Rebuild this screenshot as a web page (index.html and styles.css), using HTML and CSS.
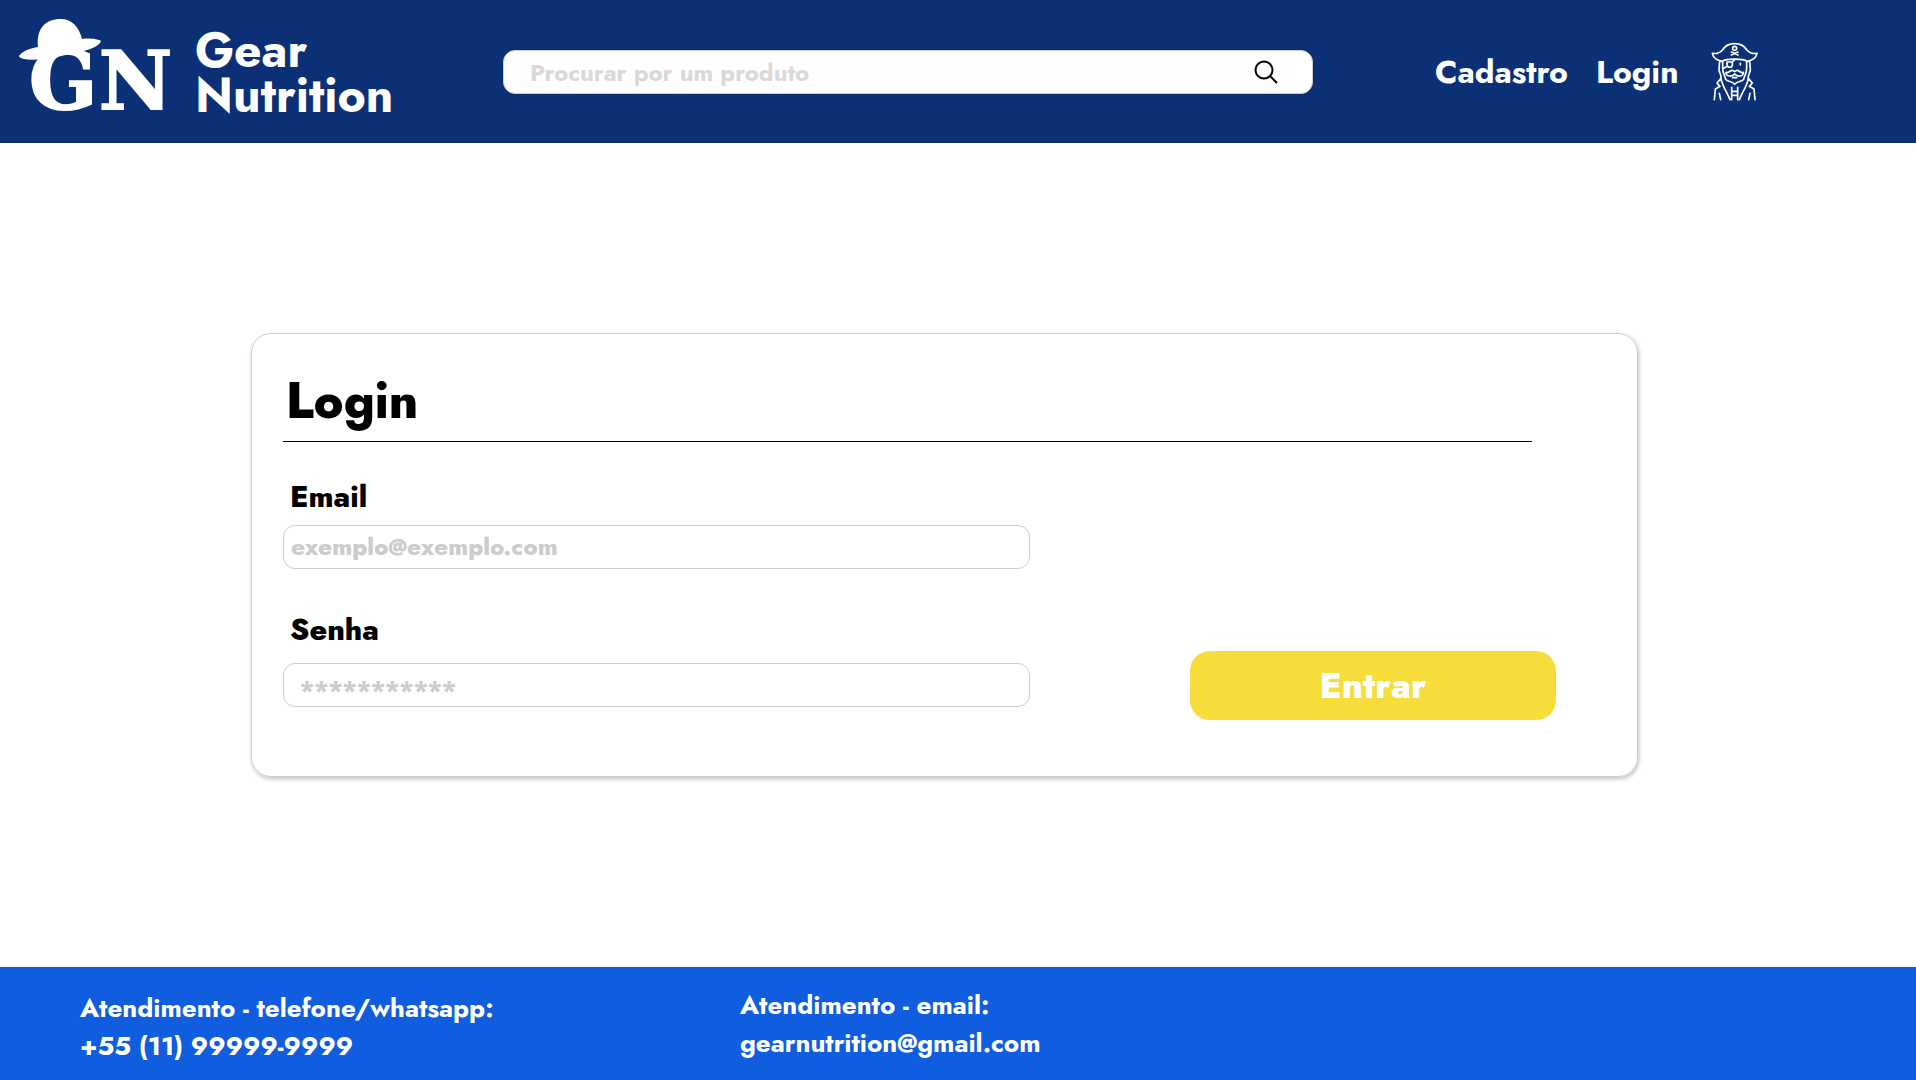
FILE: index.html
```html
<!DOCTYPE html>
<html lang="pt-BR">
<head>
<meta charset="utf-8">
<meta name="viewport" content="width=device-width, initial-scale=1">
<title>Gear Nutrition - Login</title>
<link rel="stylesheet" href="styles.css">
</head>
<body>
<header class="header">
  <a class="brand" href="#">
    <svg class="brand-logo" viewBox="0 0 160 120" aria-hidden="true">
      <text class="brand-letters" x="10" y="90">G<tspan x="80">N</tspan></text>
      <path d="M0 37C3 32 12 29 19 28C17 10 26 0 42 0C53 0 60 8 63 20C70 19 79 20 82 22C81 27 70 31 58 34C40 37 18 43 5 40C1 39 0 38 0 37Z" fill="currentColor"/>
    </svg>
    <span class="brand-name">Gear<br>Nutrition</span>
  </a>
  <form class="search" role="search">
    <input class="search-input" type="search" placeholder="Procurar por um produto" aria-label="Procurar por um produto">
    <button class="search-button" type="button" aria-label="Procurar">
      <svg viewBox="0 0 24 24" width="24" height="24" fill="none" stroke="currentColor" stroke-width="2"><circle cx="10" cy="10" r="8.5"/><path d="M16 16L23 23"/></svg>
    </button>
  </form>
  <nav class="nav">
    <a class="nav-link" href="#">Cadastro</a>
    <a class="nav-link" href="#">Login</a>
    <a class="nav-profile" href="#" aria-label="Perfil">
      <svg viewBox="33 24 144 177" width="48" height="59" fill="none" stroke="currentColor" stroke-width="5" stroke-linejoin="round" stroke-linecap="round">
        <path d="M37 58C51 60 60 57 68 47C78 32 90 29 104 29C118 29 130 32 140 47C148 57 157 60 171 58C168 72 157 79 142 82C129 73 79 73 66 82C51 79 40 72 37 58Z"/>
        <circle cx="104" cy="43" r="6"/>
        <path d="M94 54L114 63M114 54L94 63"/>
        <path d="M68 82V102C68 120 74 122 77 136C84 146 95 139 104 151C113 139 124 146 131 136C134 122 140 120 140 102V82"/>
        <path d="M60 82C55 91 60 96 57 103C55 113 64 120 63 131M148 82C153 91 148 96 151 103C153 113 144 120 145 131"/>
        <path d="M81 84H97V93C97 102 83 102 81 93ZM97 84L104 77M82 97L68 104M121 88V93"/>
        <path d="M78 115C77 128 96 130 104 120C112 130 131 128 130 115C122 119 118 108 110 109L104 113L98 109C90 108 86 119 78 115ZM98 131H110"/>
        <path d="M63 133L51 147L60 157L46 165L43 197M145 133L157 147L148 157L162 165L165 197M63 133C67 157 78 168 90 197M145 133C141 157 130 168 118 197M58 178L62 197M150 178L146 197M95 160V197M113 160V197M95 172H113M95 184H113"/>
      </svg>
    </a>
  </nav>
</header>

<main class="main">
  <section class="card">
    <h1 class="card-title">Login</h1>
    <form class="login">
      <div class="fields">
        <label class="label" for="email">Email</label>
        <input class="input" id="email" type="email" placeholder="exemplo@exemplo.com">
        <label class="label label-password" for="senha">Senha</label>
        <input class="input input-password" id="senha" type="password" placeholder="***********">
      </div>
      <button class="submit" type="button">Entrar</button>
    </form>
  </section>
</main>

<footer class="footer">
  <p class="contact contact-phone">Atendimento - telefone/whatsapp:<br>+55 (11) 99999-9999</p>
  <p class="contact">Atendimento - email:<br>gearnutrition@gmail.com</p>
</footer>
</body>
</html>
```
FILE: styles.css
```css
* {
  box-sizing: border-box;
}

body {
  margin: 0;
  min-height: 100vh;
  display: flex;
  flex-direction: column;
  background: #fff;
  color: #000;
  font-family: Jost, Lato, sans-serif;
  font-weight: 700;
}

input,
button {
  font: inherit;
}

a {
  color: inherit;
  text-decoration: none;
}

.header {
  display: grid;
  grid-template-columns: 503px 1fr 603px;
  align-items: center;
  min-height: 143px;
  background: #0b3075;
  color: #fff;
}

.brand {
  display: flex;
  align-items: center;
  gap: 16px;
  padding: 2px 0 0 19px;
}

.brand-logo {
  flex: none;
  width: 160px;
  height: 120px;
  margin-top: 12px;
}

.brand-letters {
  fill: currentColor;
  stroke: currentColor;
  stroke-width: 2px;
  font: 700 80px "DejaVu Serif", serif;
}

.brand-name {
  font-size: 48px;
  line-height: 45px;
}

.search {
  display: flex;
  align-items: center;
  height: 44px;
  padding: 0 34px 0 26px;
  border: 1px solid #ccc;
  border-radius: 12px;
  background: #fff;
}

.search-input {
  flex: 1;
  min-width: 0;
  height: 40px;
  padding: 2px 0 0;
  border: 0;
  outline: 0;
  background: none;
  font-size: 24px;
}

.search-input::placeholder {
  color: #d9d9d9;
}

.search-button {
  display: flex;
  padding: 0;
  border: 0;
  background: none;
  color: #000;
}

.nav {
  display: flex;
  align-items: center;
  gap: 28px;
  padding-left: 122px;
  font-size: 32px;
}

.nav-profile {
  display: flex;
  padding-left: 4px;
}

.main {
  flex: 1;
  display: flex;
  align-items: center;
  padding: 40px 278px 40px 251px;
}

.card {
  flex: 1;
  padding: 37px 81px 56px 31px;
  border: 1px solid #ccc;
  border-radius: 20px;
  box-shadow: 1px 2px 4px rgba(0, 0, 0, 0.25);
}

.card-title {
  margin: 0 24px 37px 0;
  padding: 0 3px 10px;
  border-bottom: 1px solid #000;
  font-size: 50px;
  font-weight: 800;
  line-height: 60px;
}

.login {
  display: flex;
  align-items: flex-end;
  justify-content: space-between;
  gap: 40px;
}

.fields {
  display: flex;
  flex-direction: column;
  flex: 0 1 747px;
  padding-bottom: 13px;
}

.label {
  margin-bottom: 10px;
  padding-left: 7px;
  font-size: 30px;
  font-weight: 800;
  line-height: 36px;
}

.label-password {
  margin: 43px 0 15px;
}

.input {
  width: 100%;
  height: 44px;
  padding: 0 7px 2px;
  border: 1px solid #ccc;
  border-radius: 12px;
  background: #fff;
  font-size: 24px;
  font-weight: 800;
}

.input-password {
  padding: 6px 16px 0;
}

.input::placeholder {
  color: #ccc;
}

.submit {
  flex: 0 0 366px;
  height: 69px;
  padding: 0 0 2px;
  border: 0;
  border-radius: 20px;
  background: #f7dd3b;
  color: #fff;
  font-size: 36px;
  font-weight: 800;
}

.footer {
  display: grid;
  grid-template-columns: 660px 1fr;
  min-height: 113px;
  padding: 19px 80px 0;
  background: #115ddf;
  color: #fff;
}

.contact {
  margin: 0;
  font-size: 26px;
  line-height: 38px;
}

.contact-phone {
  padding-top: 3px;
}
```
